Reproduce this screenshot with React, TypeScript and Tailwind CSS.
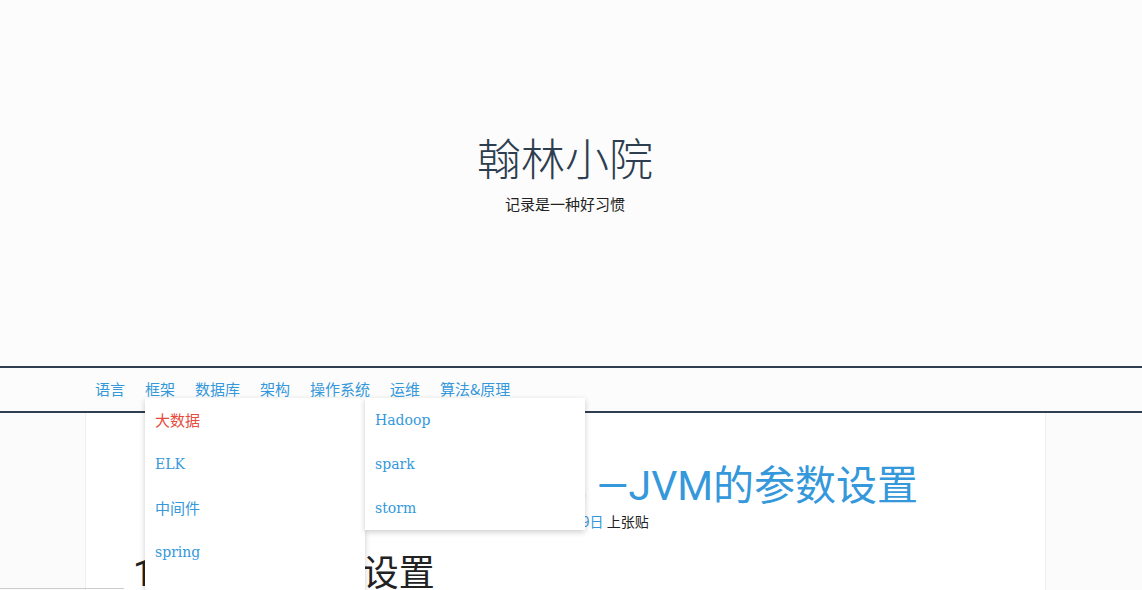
import React from 'react';

const navItems = ['语言', '框架', '数据库', '架构', '操作系统', '运维', '算法&原理'];
const frameworkMenu = ['大数据', 'ELK', '中间件', 'spring'];
const bigDataMenu = ['Hadoop', 'spark', 'storm'];

const cjk = "font-['Noto_Sans_CJK_SC',sans-serif]";
const menuFont = "font-['DejaVu_Serif','Noto_Sans_CJK_SC',serif]";

// latin labels in the menus render narrower than the chinese ones
const isLatin = (s: string) => /^[A-Za-z]+$/.test(s);

const App = () => {
  return (
    <div className="min-h-[590px] bg-[#fbfbfb] overflow-hidden">
      {/* Header */}
      <header className="h-[366px] bg-[#fcfcfc] pt-[131px] pr-[12px] text-center">
        <h1 className={`${cjk} text-[44px] leading-[53px] font-light text-[#2c3e50]`}>翰林小院</h1>
        <p className={`${cjk} mt-[9px] text-[15px] leading-[22px] text-[#222]`}>记录是一种好习惯</p>
      </header>

      {/* Nav */}
      <nav className="relative z-20 border-y-2 border-[#2f3e50] bg-[#fcfcfc]">
        <ul className={`${cjk} ml-[95px] flex h-[43px] items-center gap-5 text-[15px] text-[#3498db]`}>
          {navItems.map((item) => (
            <li key={item} className="relative">
              {item}
              {item === '框架' && (
                <div className="absolute left-0 top-[20px] flex items-start">
                  {/* Framework dropdown */}
                  <ul className={`${menuFont} w-[220px] h-[240px] bg-white shadow-[0_2px_6px_rgba(0,0,0,0.2)]`}>
                    {frameworkMenu.map((m, i) => (
                      <li
                        key={m}
                        className={`flex h-[44px] items-center px-[10px] pt-[1px] ${
                          isLatin(m) ? 'text-[14px]' : 'text-[15px]'
                        } ${i === 0 ? 'text-[#e74c3c]' : 'text-[#3498db]'}`}
                      >
                        {m}
                      </li>
                    ))}
                  </ul>
                  {/* Big data submenu */}
                  <ul className={`${menuFont} w-[220px] bg-white shadow-[0_2px_6px_rgba(0,0,0,0.2)]`}>
                    {bigDataMenu.map((m) => (
                      <li key={m} className="flex h-[44px] items-center px-[10px] pt-[1px] text-[14px] text-[#3498db]">
                        {m}
                      </li>
                    ))}
                  </ul>
                </div>
              )}
            </li>
          ))}
        </ul>
      </nav>

      {/* Content */}
      <main className="ml-[85px] w-[961px] min-h-[200px] border-x border-[#eee] bg-white pt-[49px] px-[47px]">
        <h2 className="font-['Roboto','Noto_Sans_CJK_SC',sans-serif] text-center text-[41px] leading-[48px] text-[#3498db]">
          Java虚拟机学习笔记 —JVM的参数设置
        </h2>
        <p className={`${cjk} mt-[1px] text-center text-[14px] leading-[20px] text-[#222]`}>
          于 <span className="text-[#3498db]">2018年03月09日</span> 上张贴
        </p>
        <h3 className="font-['Roboto','Noto_Sans_CJK_SC',sans-serif] mt-[22px] text-[36px] leading-[43px] text-[#222]">
          1. JVM 的参数设置
        </h3>
      </main>

      <div className="fixed bottom-[1px] left-0 h-[1px] w-[124px] bg-[#ccc]" />
    </div>
  );
};

export default App;
